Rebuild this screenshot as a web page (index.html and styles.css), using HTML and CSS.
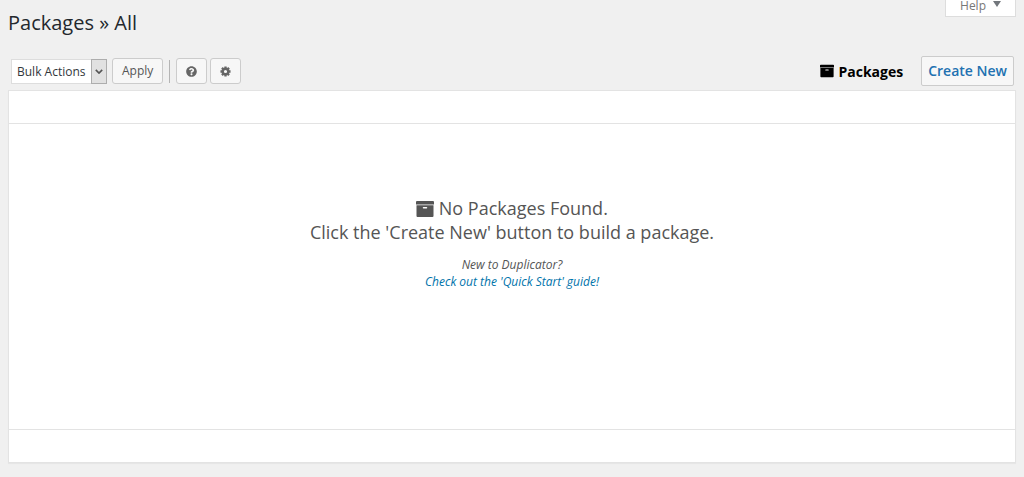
FILE: index.html
```html
<!DOCTYPE html>
<html lang="en">
<head>
<meta charset="UTF-8" />
<meta name="viewport" content="width=device-width, initial-scale=1" />
<title>Packages » All</title>
<link rel="stylesheet" href="styles.css">
</head>
<body>
  <svg class="sprite" aria-hidden="true">
    <symbol id="icon-archive" viewBox="0 0 18 18">
      <path d="M1 1h16a1 1 0 0 1 1 1v2.500H0V2a1 1 0 0 1 1-1zM.5 5.300h17V16a1 1 0 0 1-1 1h-15a1 1 0 0 1-1-1zM7.500 7a.7.7 0 0 0 0 1.500h3a.7.7 0 0 0 0-1.500z"/>
    </symbol>
  </svg>

  <header class="page-header">
    <h1>Packages » All</h1>
    <button type="button" class="help-tab">Help <span class="caret"></span></button>
  </header>

  <main>
    <form class="toolbar">
      <div class="bulk-select">
        <select id="bulk-actions" name="action" aria-label="Bulk Actions">
          <option selected>Bulk Actions</option>
          <option>Delete</option>
        </select>
        <span class="select-arrow">
          <svg viewBox="0 0 10 6" aria-hidden="true"><path d="M1 1l4 4 4-4"/></svg>
        </span>
      </div>
      <button type="button" class="button">Apply</button>
      <span class="separator"></span>
      <button type="button" class="button icon-button" aria-label="Get Help">
        <svg viewBox="0 0 512 512" aria-hidden="true"><path d="M504 256c0 136.997-111.043 248-248 248S8 392.997 8 256C8 119.083 119.043 8 256 8s248 111.083 248 248zM262.655 90c-54.497 0-89.255 22.957-116.549 63.758-3.536 5.286-2.353 12.415 2.715 16.258l34.699 26.31c5.205 3.947 12.621 3.008 16.665-2.122 17.864-22.658 30.113-35.797 57.303-35.797 20.429 0 45.698 13.148 45.698 32.958 0 14.976-12.363 22.667-32.534 33.976C247.128 238.528 216 254.941 216 296v4c0 6.627 5.373 12 12 12h56c6.627 0 12-5.373 12-12v-1.333c0-28.462 83.186-29.647 83.186-106.667 0-58.002-60.165-102-116.531-102zM256 338c-25.365 0-46 20.635-46 46 0 25.364 20.635 46 46 46s46-20.636 46-46c0-25.365-20.635-46-46-46z"/></svg>
      </button>
      <button type="button" class="button icon-button" aria-label="Settings">
        <svg class="gear" viewBox="0 0 24 24" aria-hidden="true">
          <circle cx="12" cy="12" r="6"/>
          <path d="M12 1v4M12 19v4M1 12h4M19 12h4M4.200 4.200l3 3M16.800 16.800l3 3M4.200 19.800l3-3M16.800 7.200l3-3"/>
        </svg>
      </button>

      <span class="current-view">
        <svg aria-hidden="true"><use href="#icon-archive"/></svg>
        Packages
      </span>
      <a class="create-new" href="#new">Create New</a>
    </form>

    <table class="package-list">
      <thead><tr><th></th></tr></thead>
      <tbody>
        <tr>
          <td>
            <p class="empty-title">
              <svg aria-hidden="true"><use href="#icon-archive"/></svg>
              No Packages Found.<br>
              Click the 'Create New' button to build a package.
            </p>
            <p class="empty-hint">
              New to Duplicator?<br>
              <a href="#quick-start">Check out the 'Quick Start' guide!</a>
            </p>
          </td>
        </tr>
      </tbody>
      <tfoot><tr><td></td></tr></tfoot>
    </table>
  </main>
</body>
</html>
```
FILE: styles.css
```css
:root {
  --bg-color: #f0f0f0;
  --line-color: #e3e3e3;
  --button-border: #cccccc;
  --text-color: #555;
  --link-color: #0073aa;
  --font-family: 'Segoe UI', 'Open Sans', 'Noto Sans', sans-serif;
}
* {
  box-sizing: border-box;
}
body {
  margin: 0;
  padding: 0 8px 12px;
  background: var(--bg-color);
  color: var(--text-color);
  font-family: var(--font-family);
  font-size: 12px;
}
.sprite {
  display: none;
}
button, select {
  font: inherit;
}
.page-header {
  display: flex;
  justify-content: space-between;
  align-items: flex-start;
  height: 56px;
}
.page-header h1 {
  margin: 0;
  padding-top: 8px;
  color: #23282d;
  font-size: 20px;
  font-weight: 400;
  line-height: 30px;
}
.help-tab {
  display: flex;
  align-items: flex-start;
  gap: 7px;
  padding: 0 14px 4px;
  border: 1px solid #ddd;
  border-top: 0;
  background: #fff;
  color: #777;
  line-height: 12px;
}
.caret {
  margin-top: 1px;
  border: 4px solid transparent;
  border-top: 6px solid #72777c;
  border-bottom: 0;
}
.toolbar {
  display: flex;
  align-items: center;
  height: 30px;
  margin-bottom: 4px;
  padding: 0 2px 0 3px;
}
.bulk-select {
  display: grid;
  grid-template-columns: 1fr 16px;
  width: 96px;
  height: 25px;
  margin-right: 5px;
}
.bulk-select select {
  grid-area: 1 / 1 / 2 / 3;
  appearance: none;
  padding: 0 0 0 5px;
  border: 1px solid #ddd;
  border-radius: 0;
  background: #fff;
  color: #32373c;
}
.select-arrow {
  grid-area: 1 / 2;
  display: flex;
  align-items: center;
  justify-content: center;
  border: 1px solid #adadad;
  background: #e1e1e1;
  pointer-events: none;
}
.select-arrow svg {
  width: 8px;
  height: 5px;
  fill: none;
  stroke: #555;
  stroke-width: 2;
}
.button {
  height: 26px;
  padding: 0 9px;
  border: 1px solid var(--button-border);
  border-radius: 3px;
  background: #f7f7f7;
  color: var(--text-color);
  line-height: 24px;
}
.separator {
  width: 1px;
  height: 23px;
  margin: 0 6px;
  background: #b4b4b4;
}
.icon-button {
  display: flex;
  align-items: center;
  justify-content: center;
  width: 31px;
  margin-right: 3px;
  padding: 0;
}
.icon-button svg {
  width: 11px;
  height: 11px;
  fill: #666;
}
.icon-button .gear {
  fill: none;
  stroke: #666;
  stroke-width: 5;
}
.current-view {
  display: flex;
  align-items: center;
  gap: 4px;
  margin: 0 18px 0 auto;
  color: #000;
  font-size: 14px;
  font-weight: 700;
}
.current-view svg {
  width: 14px;
  height: 14px;
}
.create-new {
  padding: 0 6px;
  border: 1px solid var(--button-border);
  border-radius: 2px;
  background: #f7f7f7;
  color: #2271b1;
  font-size: 14px;
  font-weight: 600;
  line-height: 28px;
  text-decoration: none;
}
.package-list {
  width: 100%;
  border: 1px solid var(--line-color);
  border-spacing: 0;
  background: #fff;
  box-shadow: 0 1px 1px rgb(0 0 0 / 0.04);
}
.package-list th, .package-list td {
  padding: 0;
}
.package-list thead th {
  height: 33px;
  border-bottom: 1px solid var(--line-color);
}
.package-list tbody td {
  padding: 72px 10px 139px;
  text-align: center;
}
.package-list tfoot td {
  height: 33px;
  border-top: 1px solid var(--line-color);
}
.empty-title {
  margin: 0 0 12px;
  font-size: 18px;
  line-height: 24px;
}
.empty-title svg {
  width: 18px;
  height: 18px;
  fill: #555;
  vertical-align: -3px;
}
.empty-hint {
  margin: 0;
  font-size: 12px;
  font-style: italic;
  line-height: 17px;
}
.empty-hint a {
  color: var(--link-color);
  text-decoration: none;
}
```
